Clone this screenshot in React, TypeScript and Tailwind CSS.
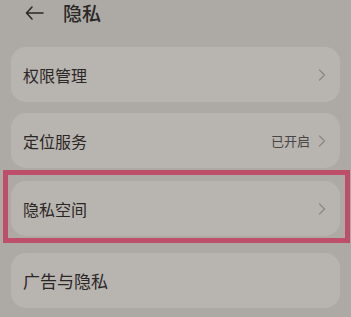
import React from 'react';

const font = { fontFamily: '"Noto Sans CJK SC", "Noto Sans", sans-serif' };

function Chevron() {
    return (
        <svg width="8" height="12" viewBox="0 0 8 12" fill="none">
            <path d="M1.5 1 L6.5 6 L1.5 11" stroke="#8d8884" strokeWidth="1.4" strokeLinecap="round" strokeLinejoin="round" />
        </svg>
    );
}

function Row({ label, value, big, noArrow }: { label: string; value?: string; big?: boolean; noArrow?: boolean }) {
    return (
        <div className="flex h-[55px] items-center justify-between rounded-[15px] bg-[#b8b4b0] pl-[12px] pr-[14px]">
            <span className={big ? 'text-[17px] text-[#2a2725]' : 'text-[16px] text-[#2a2725]'}>{label}</span>
            <div className="flex items-center gap-[8px]">
                {value && <span className="text-[13px] text-[#4a4643]">{value}</span>}
                {!noArrow && <Chevron />}
            </div>
        </div>
    );
}

export default function App() {
    return (
        <div className="h-[317px] w-[351px] overflow-hidden bg-[#adaaa6]" style={font}>
            <div className="flex h-[25px] items-center pl-[25px]">
                <svg width="19" height="14" viewBox="0 0 19 14" fill="none">
                    <path d="M7 1 L1.5 7 L7 13 M1.5 7 H18" stroke="#2a2725" strokeWidth="1.5" strokeLinecap="round" strokeLinejoin="round" />
                </svg>
                <span className="ml-[19px] text-[19px] font-medium leading-[25px] text-[#2a2725]">隐私</span>
            </div>

            <div className="mt-[22px] flex flex-col px-[11px]">
                <Row label="权限管理" />
                <div className="mt-[11px]">
                    <Row label="定位服务" value="已开启" />
                </div>
                <div className="mt-[2px] -ml-[8px] -mr-[10px] border-[5px] border-[#bd4f6b] pb-[2px] pl-[3px] pr-[5px] pt-[6px]">
                    <Row label="隐私空间" />
                </div>
                <div className="mt-[10px]">
                    <Row label="广告与隐私" big noArrow />
                </div>
            </div>
        </div>
    );
}
